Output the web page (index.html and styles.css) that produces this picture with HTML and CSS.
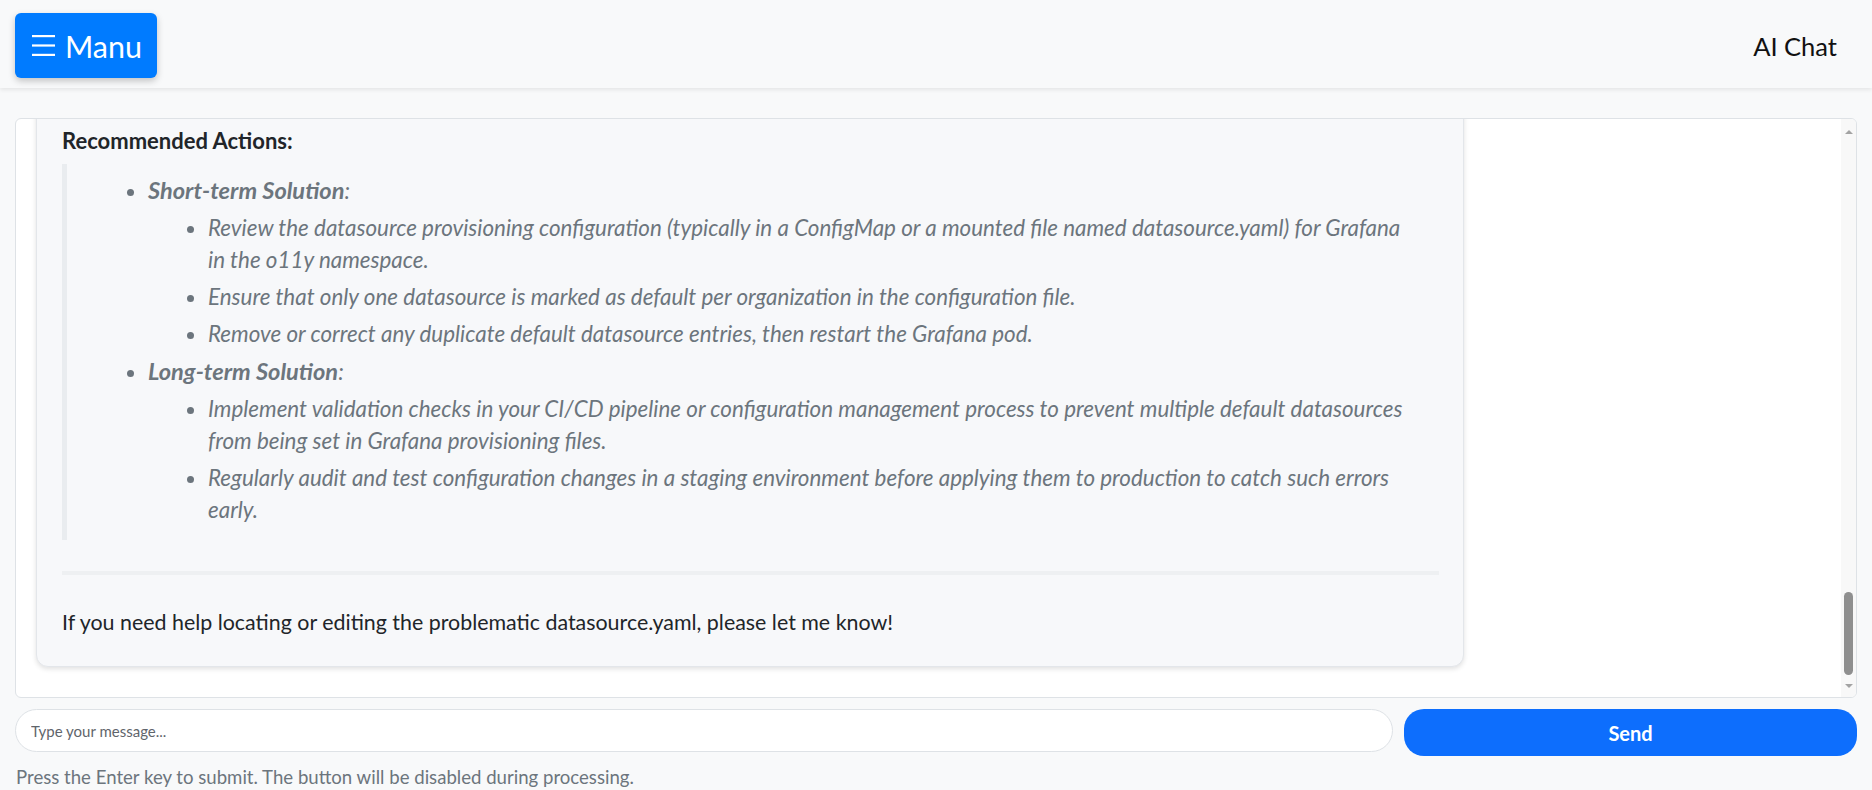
FILE: index.html
```html
<!DOCTYPE html>
<html lang="en">
<head>
<meta charset="utf-8">
<title>AI Chat</title>
<link rel="stylesheet" href="styles.css">
</head>
<body>
<header class="topbar">
  <button class="menu-btn" type="button">
    <svg class="menu-icon" viewBox="0 0 23 21" width="23" height="21" aria-hidden="true">
      <rect x="0" y="0" width="23" height="2.2" fill="#fff"/>
      <rect x="0" y="9.4" width="23" height="2.2" fill="#fff"/>
      <rect x="0" y="18.8" width="23" height="2.2" fill="#fff"/>
    </svg>
    <span>Manu</span>
  </button>
  <div class="brand">AI Chat</div>
</header>
<main class="page">
  <section class="chat">
    <div class="chat-scroll">
      <div class="chat-inner">
        <article class="bubble">
          <div class="earlier"></div>
          <p class="heading"><strong>Recommended Actions:</strong></p>
          <blockquote class="quote">
            <ul class="list">
              <li><strong>Short-term Solution</strong>:
                <ul class="list sub">
                  <li>Review the datasource provisioning configuration (typically in a ConfigMap or a mounted file named datasource.yaml) for Grafana in the o11y namespace.</li>
                  <li>Ensure that only one datasource is marked as default per organization in the configuration file.</li>
                  <li>Remove or correct any duplicate default datasource entries, then restart the Grafana pod.</li>
                </ul>
              </li>
              <li><strong>Long-term Solution</strong>:
                <ul class="list sub">
                  <li>Implement validation checks in your CI/CD pipeline or configuration management process to prevent multiple default datasources from being set in Grafana provisioning files.</li>
                  <li>Regularly audit and test configuration changes in a staging environment before applying them to production to catch such errors early.</li>
                </ul>
              </li>
            </ul>
          </blockquote>
          <hr class="divider">
          <p class="closing">If you need help locating or editing the problematic datasource.yaml, please let me know!</p>
        </article>
      </div>
    </div>
    <div class="scrollbar" aria-hidden="true">
      <span class="sb-arrow sb-up"></span>
      <span class="sb-thumb"></span>
      <span class="sb-arrow sb-down"></span>
    </div>
  </section>
  <form class="composer">
    <input class="composer-input" type="text" placeholder="Type your message...">
    <button class="send-btn" type="button">Send</button>
  </form>
  <p class="hint">Press the Enter key to submit. The button will be disabled during processing.</p>
</main>
</body>
</html>
```

FILE: styles.css
```css
* { box-sizing: border-box; }
html, body { margin: 0; padding: 0; }
body {
  background: #f8f9fa;
  color: #212529;
  font-family: Lato, "Noto Sans", sans-serif;
  height: 790px;
  overflow: hidden;
}

/* Header */
.topbar {
  height: 88px;
  padding: 3px 35px 0 15px;
  display: flex;
  align-items: center;
  justify-content: space-between;
  background: #f8f9fa;
  box-shadow: 0 2px 4px rgba(0, 0, 0, 0.08);
  position: relative;
  z-index: 1;
}
.menu-btn {
  height: 65px;
  display: flex;
  align-items: center;
  gap: 10px;
  padding: 0 15px 0 17px;
  background: #007bff;
  color: #fff;
  border: 0;
  border-radius: 6px;
  box-shadow: 0 3px 7px rgba(0, 0, 0, 0.22);
  font-family: Lato, "Noto Sans", sans-serif;
  font-size: 30.5px;
}
.menu-icon { display: block; }
.brand {
  font-size: 25.5px;
  color: #111;
}

/* Chat area */
.page { padding: 0 15px; }
.chat {
  margin-top: 30px;
  height: 580px;
  background: #fff;
  border: 1px solid #dee2e6;
  border-radius: 6px;
  overflow: hidden;
  display: flex;
}
.chat-scroll {
  flex: 1;
  min-width: 0;
  overflow-y: auto;
  display: flex;
  flex-direction: column-reverse;
}
.chat-inner { padding: 20px 20px 30px; }
.bubble {
  width: 80%;
  background: #f7f8fa;
  border: 1px solid #e3e6ea;
  border-radius: 12px;
  box-shadow: 0 2px 5px rgba(0, 0, 0, 0.12);
  padding: 0 24px 28px 25px;
  font-size: 21.4px;
  line-height: 32px;
}
.earlier { height: 3230px; }
.heading { margin: 0; font-size: 22px; }
.heading strong { font-weight: 700; }
.quote {
  margin: 7px 20px 0 0;
  padding: 5px 0 14px 41px;
  border-left: 5px solid #e9ecef;
  color: #6c757d;
  font-style: italic;
  font-size: 22.4px;
}
.quote strong { font-size: 23.6px; }
.list { margin: 0; padding-left: 40px; list-style-type: disc; }
.list.sub { padding-left: 60px; }
.list li { margin-top: 5px; }
.divider {
  height: 4px;
  border: 0;
  margin: 31px 0;
  background: #eef0f2;
}
.closing { margin: 0; }

/* Fake classic scrollbar (the page is captured with native scrollbars hidden) */
.scrollbar {
  width: 15px;
  flex: 0 0 15px;
  display: flex;
  flex-direction: column;
  align-items: center;
  padding: 11px 0 9px;
  background: #f8f8f8;
}
.sb-arrow {
  width: 0;
  height: 0;
  border-left: 4px solid transparent;
  border-right: 4px solid transparent;
}
.sb-up { border-bottom: 4px solid #a3a3a3; }
.sb-down { border-top: 4px solid #a3a3a3; margin-top: 9px; }
.sb-thumb {
  margin-top: auto;
  width: 9px;
  height: 83px;
  border-radius: 5px;
  background: #8f8f8f;
}

/* Composer */
.composer {
  display: flex;
  align-items: flex-start;
  gap: 11px;
  margin-top: 11px;
}
.composer-input {
  flex: 1;
  height: 43px;
  border: 1px solid #dee2e6;
  border-radius: 22px;
  padding: 0 15px;
  background: #fff;
  font-family: Lato, "Noto Sans", sans-serif;
  font-size: 15px;
  color: #212529;
}
.composer-input::placeholder { color: #5f656b; }
.send-btn {
  width: 453px;
  height: 47px;
  border: 0;
  border-radius: 20px;
  background: #0d6efd;
  color: #fff;
  font-family: Lato, "Noto Sans", sans-serif;
  font-size: 20px;
  font-weight: 700;
}
.hint {
  margin: 9px 0 0 1px;
  font-size: 18.6px;
  line-height: 24px;
  color: #6c757d;
}
```
